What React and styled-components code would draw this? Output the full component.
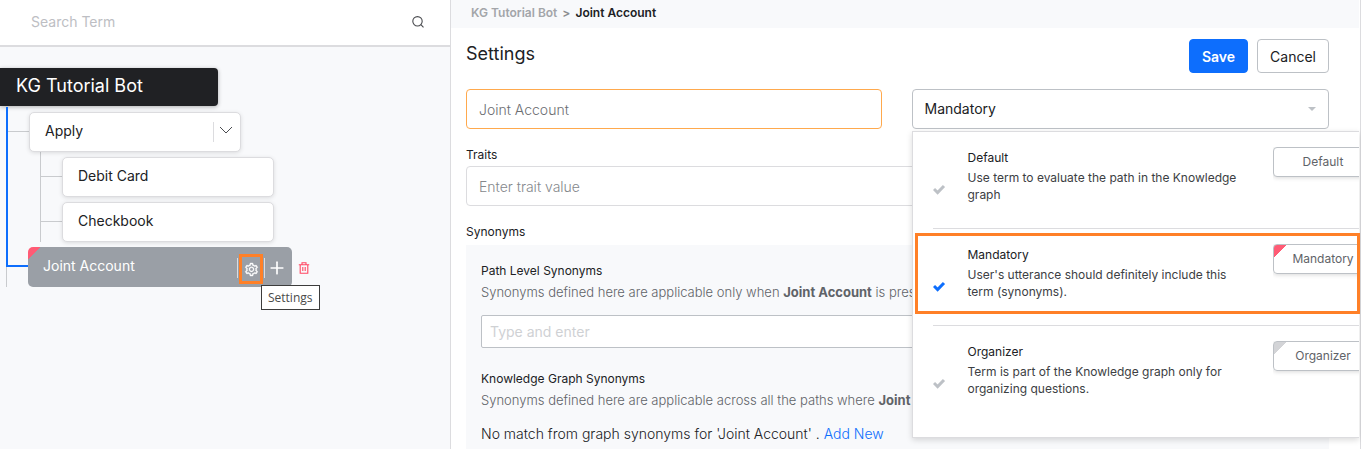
import React from "react";
import styled, { createGlobalStyle, css } from "styled-components";
import { Plus } from "lucide-react";
import { AiOutlineSetting } from "react-icons/ai";

const color = {
  ink: "#202124",
  text: "#3c4043",
  muted: "#5f6368",
  line: "#dcdcdf",
  field: "#bdc1c6",
  panel: "#f8f9fb",
  blue: "#0d6efd",
  red: "#ff5b75",
  orange: "#ff8027",
};

const GlobalStyle = createGlobalStyle`
  * { box-sizing: border-box; }
  body { margin: 0; font-family: Inter, "Liberation Sans", sans-serif; color: ${color.ink}; background: #fff; }
  button, input, select { font-family: inherit; }
  ul { list-style: none; margin: 0; padding: 0; }
  h1, h2, h3, p { margin: 0; }
`;

const Page = styled.div`
  display: flex;
  height: 100vh;
  overflow: hidden;
`;

/* Term tree */

const Sidebar = styled.aside`
  flex: 0 0 451px;
  background: ${color.panel};
  border-right: 1px solid ${color.line};
`;

const SearchBar = styled.label`
  display: flex;
  align-items: center;
  height: 47px;
  padding: 0 25px 2px 31px;
  background: #fff;
  border-bottom: 2px solid ${color.line};
`;

const SearchInput = styled.input`
  flex: 1;
  min-width: 0;
  padding: 0;
  border: 0;
  outline: 0;
  font-size: 14px;
  background: transparent;
  &::placeholder { color: #bdbec3; opacity: 1; }
`;

const Tree = styled.nav`
  padding-top: 21px;
`;

const RootNode = styled.div`
  width: 218px;
  padding: 0 16px 2px;
  border-radius: 0 4px 4px 0;
  background: ${color.ink};
  color: #fff;
  font-size: 18px;
  line-height: 36px;
  box-shadow: 0 1px 4px rgba(0, 0, 0, 0.3);
  margin-bottom: 1px;
`;

const Branches = styled.ul`
  padding-left: 6px;
`;

const ActiveBranch = styled.li`
  border-left: 2px solid ${color.blue};
`;

const SubBranches = styled.ul`
  margin-left: 32px;
  border-left: 1px solid #c9cbce;
`;

const Row = styled.div`
  display: flex;
  align-items: center;
  padding-top: 5px;
`;

const Connector = styled.span`
  width: 21px;
  height: 1px;
  margin-bottom: 1px;
  background: #c9cbce;
`;

const Node = styled.div`
  display: flex;
  align-items: center;
  width: 212px;
  height: 40px;
  padding: 0 3px 0 15px;
  border: 1px solid ${color.line};
  border-radius: 5px;
  background: #fff;
  box-shadow: 0 1px 4px rgba(0, 0, 0, 0.12);
  font-size: 14px;
`;

const NodeName = styled.span`
  flex: 1;
  padding-bottom: 3px;
`;

const Divider = styled.span`
  width: 1px;
  height: 20px;
  background: ${color.line};
`;

const IconButton = styled.button`
  display: flex;
  align-items: center;
  justify-content: center;
  width: ${(p) => p.$width || 24}px;
  height: ${(p) => p.$height || 30}px;
  padding: 0;
  border: 0;
  background: transparent;
  color: ${(p) => p.$color || "inherit"};
`;

const SelectedRow = styled.li`
  display: flex;
  align-items: flex-end;
`;

const Rail = styled.div`
  width: 22px;
`;

const RailUpper = styled.div`
  height: 25px;
  border-left: 2px solid ${color.blue};
  border-bottom: 2px solid ${color.blue};
`;

const RailLower = styled.div`
  height: 20px;
  border-left: 1px solid #c9cbce;
`;

const SelectedNode = styled.div`
  display: flex;
  align-items: center;
  width: 264px;
  height: 40px;
  padding: 2px 3px 0 15px;
  border-radius: 5px;
  background: linear-gradient(135deg, ${color.red} 9px, #9a9fa6 9px);
  color: #fff;
  font-size: 14px;
`;

const SelectedName = styled(NodeName)`
  padding-bottom: 5px;
`;

const SettingsAnchor = styled.div`
  position: relative;
  margin: 2px 1px 0;
`;

const SettingsButton = styled(IconButton)`
  border: 3px solid ${color.orange};
`;

const Tooltip = styled.span`
  position: absolute;
  top: 31px;
  left: 22px;
  padding: 0 6px;
  border: 1px solid #3c3c3c;
  background: #fff;
  color: #4a4a4a;
  font-family: "Open Sans", sans-serif;
  font-size: 12px;
  line-height: 23px;
`;

/* Settings form */

const Main = styled.main`
  flex: 1;
  min-width: 0;
  border-right: 1px solid ${color.line};
  padding-right: 1px;
`;

const Breadcrumb = styled.nav`
  display: flex;
  gap: 5px;
  height: 28px;
  padding-left: 20px;
  background: ${color.panel};
  font-size: 12px;
  font-weight: 600;
  line-height: 26px;
`;

const Crumb = styled.a`
  color: ${(p) => (p.$current ? color.ink : "#a3a5a9")};
  text-decoration: none;
`;

const CrumbArrow = styled.span`
  color: #8a8c90;
`;

const Form = styled.form`
  padding: 11px 30px 0 15px;
`;

const FormHeader = styled.div`
  display: flex;
  gap: 9px;
  margin-bottom: 16px;
`;

const Title = styled.h1`
  flex: 1;
  font-size: 18px;
  font-weight: 400;
  line-height: 30px;
`;

const Button = styled.button`
  height: 34px;
  padding: 0 12px;
  border: 1px solid ${(p) => (p.$primary ? color.blue : color.field)};
  border-radius: 4px;
  background: ${(p) => (p.$primary ? color.blue : "#fff")};
  color: ${(p) => (p.$primary ? "#fff" : color.ink)};
  font-size: 14px;
  font-weight: ${(p) => (p.$primary ? 600 : 400)};
`;

const FieldRow = styled.div`
  display: grid;
  grid-template-columns: calc(50% - 16px) 1fr;
  gap: 30px;
  margin-bottom: 15px;
`;

const fieldLook = css`
  display: block;
  width: 100%;
  height: 40px;
  padding: 0 12px;
  border: 1px solid ${color.field};
  border-radius: 4px;
  background: #fff;
  color: ${color.ink};
  font-size: 14px;
  outline: 0;
`;

const TextField = styled.input`
  ${fieldLook}
  border-color: ${(p) => (p.$highlight ? "#ffa94d" : color.line)};
  color: #6c6e72;
  font-weight: 300;
  &::placeholder { color: #85888c; opacity: 1; }
`;

const SynonymField = styled.input`
  ${fieldLook}
  height: 33px;
  padding: 0 8px;
  border-radius: 2px;
  margin-bottom: 20px;
  &::placeholder { color: #cfd1d4; opacity: 1; }
`;

const SelectWrap = styled.div`
  position: relative;
`;

const SelectField = styled.select`
  ${fieldLook}
  appearance: none;
  padding-bottom: 2px;
`;

const Caret = styled.svg`
  position: absolute;
  top: 18px;
  right: 13px;
  pointer-events: none;
`;

const Label = styled.label`
  display: block;
  font-size: 12px;
  line-height: 22px;
`;

const SynonymsTitle = styled.h2`
  margin-top: 16px;
  font-size: 12px;
  font-weight: 400;
  line-height: 20px;
  margin-bottom: 3px;
`;

const SynonymsBox = styled.section`
  padding: 15px 15px 40px;
  background: ${color.panel};
`;

const GroupTitle = styled.h3`
  font-size: 12px;
  font-weight: 400;
  line-height: 22px;
`;

const GroupText = styled.p`
  margin-bottom: 13px;
  color: ${color.muted};
  font-size: 13px;
  font-weight: 300;
  line-height: 20px;
  white-space: nowrap;
  strong { font-weight: 700; }
`;

const MatchText = styled.p`
  font-size: 14px;
  font-weight: 300;
  line-height: 22px;
`;

const Link = styled.a`
  color: ${color.blue};
  text-decoration: none;
`;

/* Term type menu */

const Menu = styled.ul`
  position: absolute;
  z-index: 2;
  top: 42px;
  left: 0;
  right: -30px;
  height: 307px;
  padding-left: 20px;
  border: 1px solid ${color.line};
  border-right: 0;
  background: #fff;
  box-shadow: 0 2px 6px rgba(0, 0, 0, 0.15);
`;

const Option = styled.li`
  position: relative;
  display: flex;
  height: 97px;
  padding-top: 15px;
  border-bottom: 1px solid ${color.line};
  &:last-child { border-bottom: 0; }
  ${(p) => p.$selected && css`
    &::after {
      content: "";
      position: absolute;
      top: 4px;
      left: -18px;
      right: -1px;
      bottom: 11px;
      border: 3px solid ${color.orange};
    }
  `}
`;

const Tick = styled.svg`
  flex: none;
  margin-top: 37px;
  stroke: ${(p) => (p.$on ? color.blue : color.field)};
`;

const OptionBody = styled.div`
  flex: 1;
  padding: 2px 30px 0 22px;
  font-size: 12px;
`;

const OptionName = styled.div`
  line-height: 17px;
  margin-bottom: 3px;
`;

const OptionText = styled.p`
  color: ${color.text};
  line-height: 17px;
`;

const TagClip = styled.div`
  flex: none;
  width: 86px;
  overflow: hidden;
`;

const Tag = styled.span`
  display: block;
  width: 100px;
  margin-bottom: 6px;
  border: 1px solid ${color.field};
  border-radius: 4px;
  background: ${(p) => (p.$corner ? `linear-gradient(135deg, ${p.$corner} 9px, #fff 9px)` : "#fff")};
  box-shadow: 0 1px 4px rgba(0, 0, 0, 0.15);
  color: ${color.muted};
  font-size: 12px;
  line-height: 28px;
  text-align: center;
`;

const termTypes = [
  { name: "Default", text: "Use term to evaluate the path in the Knowledge graph" },
  { name: "Mandatory", text: "User's utterance should definitely include this term (synonyms).", corner: color.red },
  { name: "Organizer", text: "Term is part of the Knowledge graph only for organizing questions.", corner: "#d3d4d7" },
];

function SearchIcon() {
  return (
    <svg width="14" height="14" viewBox="0 0 14 14" fill="none" stroke="#4a4c50" strokeWidth="1.1" aria-hidden="true">
      <circle cx="6.5" cy="6.3" r="4.7" />
      <path d="M9.9 9.7l2.6 2.6" />
    </svg>
  );
}

function TrashIcon() {
  return (
    <svg width="12" height="12" viewBox="0 0 12 12" fill="none" stroke="currentColor" strokeWidth="1.1" aria-hidden="true">
      <path d="M.8 2.8h10.4M2.2 2.8v8.4h7.6V2.8M4 2.8V.8h4v2M4.8 5v4M7.2 5v4" />
    </svg>
  );
}

function TermTree() {
  return (
    <Sidebar>
      <SearchBar>
        <SearchInput type="text" placeholder="Search Term" aria-label="Search Term" />
        <SearchIcon />
      </SearchBar>
      <Tree aria-label="Terms">
        <RootNode>KG Tutorial Bot</RootNode>
        <Branches>
          <ActiveBranch>
            <Row>
              <Connector />
              <Node>
                <NodeName>Apply</NodeName>
                <Divider />
                <IconButton type="button" aria-label="Collapse Apply" $width={23}>
                  <svg width="14" height="12" viewBox="0 0 14 12" fill="none" stroke="#4a4c50">
                    <path d="M1 1l6 6 6-6" />
                  </svg>
                </IconButton>
              </Node>
            </Row>
            <SubBranches>
              {["Debit Card", "Checkbook"].map((name) => (
                <li key={name}>
                  <Row>
                    <Connector />
                    <Node><NodeName>{name}</NodeName></Node>
                  </Row>
                </li>
              ))}
            </SubBranches>
          </ActiveBranch>
          <SelectedRow>
            <Rail><RailUpper /><RailLower /></Rail>
            <SelectedNode>
              <SelectedName>Joint Account</SelectedName>
              <Divider />
              <SettingsAnchor>
                <SettingsButton type="button" aria-label="Settings">
                  <AiOutlineSetting size={15} stroke="currentColor" strokeWidth={24} />
                </SettingsButton>
                <Tooltip role="tooltip">Settings</Tooltip>
              </SettingsAnchor>
              <Divider />
              <IconButton type="button" aria-label="Add term">
                <Plus size={20} strokeWidth={2} />
              </IconButton>
            </SelectedNode>
            <IconButton type="button" aria-label="Delete term" $color="#ff4763" $height={38}>
              <TrashIcon />
            </IconButton>
          </SelectedRow>
        </Branches>
      </Tree>
    </Sidebar>
  );
}

function TermTypeMenu() {
  return (
    <Menu role="listbox" aria-label="Term type">
      {termTypes.map(({ name, text, corner }) => {
        const selected = name === "Mandatory";
        return (
          <Option key={name} role="option" aria-selected={selected} $selected={selected}>
            <Tick $on={selected} width="13" height="11" viewBox="0 0 13 11" fill="none" strokeWidth="3" aria-hidden="true">
              <path d="M1 5l3.6 3.6L11 2" />
            </Tick>
            <OptionBody>
              <OptionName>{name}</OptionName>
              <OptionText>{text}</OptionText>
            </OptionBody>
            <TagClip><Tag $corner={corner}>{name}</Tag></TagClip>
          </Option>
        );
      })}
    </Menu>
  );
}

export default function App() {
  return (
    <Page>
      <GlobalStyle />
      <TermTree />
      <Main>
        <Breadcrumb aria-label="Breadcrumb">
          <Crumb href="#bot">KG Tutorial Bot</Crumb>
          <CrumbArrow>&gt;</CrumbArrow>
          <Crumb href="#term" $current>Joint Account</Crumb>
        </Breadcrumb>
        <Form>
          <FormHeader>
            <Title>Settings</Title>
            <Button type="submit" $primary>Save</Button>
            <Button type="button">Cancel</Button>
          </FormHeader>
          <FieldRow>
            <TextField $highlight aria-label="Term name" defaultValue="Joint Account" />
            <SelectWrap>
              <SelectField aria-label="Term type" defaultValue="Mandatory">
                {termTypes.map(({ name }) => <option key={name}>{name}</option>)}
              </SelectField>
              <Caret width="8" height="4" viewBox="0 0 8 4"><path d="M0 0h8L4 4z" fill="#bdc1c6" /></Caret>
              <TermTypeMenu />
            </SelectWrap>
          </FieldRow>
          <Label htmlFor="traits">Traits</Label>
          <TextField id="traits" placeholder="Enter trait value" />
          <SynonymsTitle>Synonyms</SynonymsTitle>
          <SynonymsBox>
            <GroupTitle>Path Level Synonyms</GroupTitle>
            <GroupText>
              Synonyms defined here are applicable only when <strong>Joint Account</strong> is present
            </GroupText>
            <SynonymField aria-label="Path Level Synonyms" placeholder="Type and enter" />
            <GroupTitle>Knowledge Graph Synonyms</GroupTitle>
            <GroupText>
              Synonyms defined here are applicable across all the paths where <strong>Joint Account</strong>
            </GroupText>
            <MatchText>
              No match from graph synonyms for 'Joint Account' . <Link href="#add">Add New</Link>
            </MatchText>
          </SynonymsBox>
        </Form>
      </Main>
    </Page>
  );
}
